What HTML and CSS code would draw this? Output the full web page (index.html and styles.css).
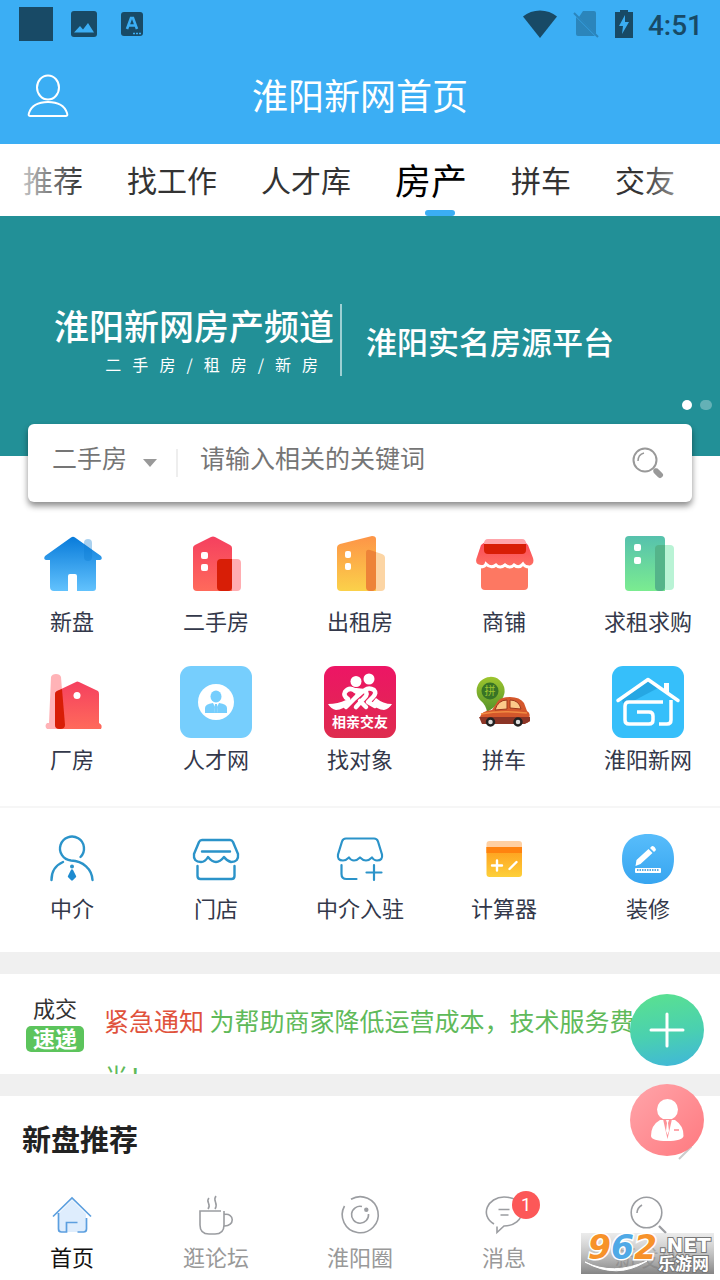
FILE: index.html
```html
<!DOCTYPE html>
<html lang="zh-CN">
<head>
<meta charset="utf-8">
<meta name="viewport" content="width=device-width, initial-scale=1">
<title>淮阳新网首页</title>
<link rel="stylesheet" href="styles.css">
</head>
<body>
<header class="header">
  <div class="status">
    <div class="status-left">
      <svg width="34" height="34" viewBox="0 0 34 34"><rect width="34" height="34" fill="#184a66"/></svg>
      <svg width="26" height="26" viewBox="0 0 26 26"><rect width="26" height="26" rx="3" fill="#184a66"/><path d="M3 21.500l6-6.500 3 3.500 5-6.500 6 9.500z" fill="#3baef4"/></svg>
      <svg width="22" height="24" viewBox="0 0 22 24"><rect width="22" height="24" rx="3" fill="#184a66"/><path d="M6 17L10 6h2l4 11M8 13.500h6" fill="none" stroke="#3baef4" stroke-width="2.600"/><path d="M12 21.500h8" stroke="#3baef4" stroke-width="1.500" stroke-dasharray="2 1"/></svg>
    </div>
    <div class="status-right">
      <svg width="36" height="30" viewBox="0 0 36 30"><path d="M18 29L1 7.500C10-.5 26-.5 35 7.500z" fill="#184a66"/></svg>
      <svg width="28" height="30" viewBox="0 0 28 30"><path d="M11 2h11q2 0 2 2v21L7 8zM4 8l19 19H6q-2 0-2-2z" fill="#2b85bb"/><path d="M2 4l24 24" stroke="#2b85bb" stroke-width="2"/></svg>
      <svg width="20" height="30" viewBox="0 0 20 30"><path d="M6 1h8v2h5v26H1V3h5z" fill="#184a66"/><path d="M11 6L5 17h4l-1 8 7-12h-4z" fill="#3baef4"/></svg>
      <span class="clock">4:51</span>
    </div>
  </div>
  <div class="titlebar">
    <button class="profile" type="button" aria-label="我的">
      <svg width="48" height="48" viewBox="0 0 48 48" fill="none" stroke="#fff" stroke-width="2"><ellipse cx="24" cy="15.500" rx="11" ry="12"/><path d="M6 44q-2 0-1-3c3-9 11-11 19-11s16 2 19 11q1 3-1 3z"/></svg>
    </button>
    <h1 class="title">淮阳新网首页</h1>
  </div>
</header>

<nav class="tabs" aria-label="频道">
  <a href="#tuijian">推荐</a>
  <a href="#gongzuo">找工作</a>
  <a href="#rencai">人才库</a>
  <a href="#fangchan" class="current">房产</a>
  <a href="#pinche">拼车</a>
  <a href="#jiaoyou">交友</a>
</nav>

<main class="main">
  <section class="banner">
    <div class="banner-row">
      <div class="banner-name">
        <h2>淮阳新网房产频道</h2>
        <p><span>二</span> <span>手</span> <span>房</span> <span>/</span> <span>租</span> <span>房</span> <span>/</span> <span>新</span> <span>房</span></p>
      </div>
      <p class="slogan">淮阳实名房源平台</p>
    </div>
    <div class="dots"><i class="on"></i><i></i></div>
  </section>

  <form class="search">
    <label class="kind">
      <select aria-label="类型"><option>二手房</option><option>出租房</option></select>
      <svg width="14" height="8" viewBox="0 0 14 8"><path d="M0 0h14L7 8z" fill="#999"/></svg>
    </label>
    <input class="keyword" type="text" aria-label="关键词" placeholder="请输入相关的关键词">
    <button type="submit" aria-label="搜索">
      <svg width="32" height="32" viewBox="0 0 32 32" fill="none" stroke="#999"><circle cx="13" cy="13" r="11.500" stroke-width="2"/><path d="M6 14c0-4 2-7 6-8" stroke-width="1.500"/><path d="M22 22l2 2" stroke-width="3"/><path d="M24.500 24.500l3.500 3.500" stroke-width="6" stroke-linecap="round"/></svg>
    </button>
  </form>

  <section class="grid">
    <a href="#xinpan">
      <svg class="big" viewBox="0 0 72 72"><defs><linearGradient id="g1" x2="0" y2="1"><stop stop-color="#087bda"/><stop offset="1" stop-color="#62c2fd"/></linearGradient></defs><path d="M35 9.500q2-1.500 4 0L65 28q2 3-1 4h-4v28q0 3-3 3H41V48q0-2-2-2h-5q-2 0-2 2v15H18q-4 0-4-4V32h-4q-3-1-1-4z" fill="url(#g1)"/><rect x="48" y="11" width="8" height="22" rx="4" fill="#0c7bd0" opacity=".35"/></svg>
      <span>新盘</span></a>
    <a href="#ershou">
      <svg class="big" viewBox="0 0 72 72"><defs><linearGradient id="g2" x2="0" y2="1"><stop stop-color="#f5405f"/><stop offset="1" stop-color="#ff6a5b"/></linearGradient></defs><rect x="37" y="31" width="24" height="32" rx="4" fill="#ffadb1"/><path d="M31 9q2-1 4 0l15 8q2 1 2 3v43H17q-4 0-4-4V20q0-2 2-3z" fill="url(#g2)"/><path d="M41 31h11v28q0 4-4 4h-7q-4 0-4-4V35q0-4 4-4z" fill="#d81e06"/><g fill="#fff"><rect x="21" y="24" width="7" height="7" rx="2"/><rect x="21" y="36" width="7" height="7" rx="2"/></g></svg>
      <span>二手房</span></a>
    <a href="#chuzu">
      <svg class="big" viewBox="0 0 72 72"><defs><linearGradient id="g3" x2="0" y2="1"><stop stop-color="#fd9447"/><stop offset="1" stop-color="#fbd14a"/></linearGradient></defs><path d="M42 25q0-4 4-3l12 4q3 1 3 4v29q0 4-4 4H46q-4 0-4-4z" fill="#fcd5a4"/><path d="M13 20q0-3 3-4l32-8q4 0 4 3v52H17q-4 0-4-4z" fill="url(#g3)"/><path d="M42 25q0-4 4-3l6 2v35q0 4-4 4h-2q-4 0-4-4z" fill="#ed8338"/><g fill="#fff"><rect x="21" y="23" width="6" height="7" rx="2"/><rect x="21" y="35" width="6" height="7" rx="2"/></g></svg>
      <span>出租房</span></a>
    <a href="#shangpu">
      <svg class="big" viewBox="0 0 72 72"><defs><linearGradient id="g4" x2="0" y2="1"><stop stop-color="#fb4757"/><stop offset="1" stop-color="#fd6f62"/></linearGradient></defs><path d="M13 38h47v20q0 4-4 4H17q-4 0-4-4z" fill="#fd7862"/><path d="M17 14h40l3 3 5 13q2 7-5 8-4-1-5-3-4 5-9 1-4 4-9 0-5 4-9 0-5 4-10-1-2 3-5 2-7-1-4-8l4-12z" fill="url(#g4)"/><path d="M12 39q5 0 6-3 5 5 10 1 4 4 9 0 5 4 9 0 5 4 9-1 2 3 6 3" fill="none" stroke="#fff" stroke-width="3"/><path d="M16 16q0-5 4-5h34q4 0 4 5z" fill="#ffa4aa"/><path d="M16 16h42v6q0 4-4 4H20q-4 0-4-4z" fill="#d81e06"/></svg>
      <span>商铺</span></a>
    <a href="#qiuzu">
      <svg class="big" viewBox="0 0 72 72"><defs><linearGradient id="g5" x2="0" y2="1"><stop stop-color="#56c1ad"/><stop offset="1" stop-color="#7bec90"/></linearGradient></defs><rect x="43" y="17" width="19" height="45" rx="4" fill="#b9f3d5"/><path d="M17 8h32q4 0 4 4v51H17q-4 0-4-4V12q0-4 4-4z" fill="url(#g5)"/><path d="M43 21q0-4 4-4h6v42q0 4-4 4h-2q-4 0-4-4z" fill="#54b48a"/><g fill="#fff"><rect x="22" y="16" width="7" height="7" rx="2"/><rect x="22" y="29" width="7" height="7" rx="2"/></g></svg>
      <span>求租求购</span></a>
    <a href="#changfang">
      <svg class="big" viewBox="0 0 72 72"><path d="M15 11q1-3 5-3t5 3l4 52H11q-3-3 0-6h2z" fill="#ffb3b7"/><path d="M40 16q1-1 3 0l19 9q1 1 1 3v29q4 2 2 6H23q-4 0-4-4V28q0-2 2-3z" fill="url(#g2)"/><path d="M19 28q0-2 2-3l5-2 3 36q0 4-5 4t-5-4z" fill="#d81e06"/><circle cx="41" cy="29.500" r="3.500" fill="#fff"/></svg>
      <span>厂房</span></a>
    <a href="#rencaiwang">
      <svg class="big" viewBox="0 0 72 72"><rect width="72" height="72" rx="11" fill="#76cefd"/><circle cx="36" cy="36" r="18" fill="#fff"/><g fill="#76cefd"><ellipse cx="36" cy="30.500" rx="5.500" ry="6"/><path d="M25 47v-5q0-4 8-5l2 4-1 6zM47 47v-5q0-4-8-5l-2 4 1 6z"/><path d="M35 38h2l1 9h-4z"/></g></svg>
      <span>人才网</span></a>
    <a href="#duixiang">
      <svg class="big" viewBox="0 0 72 72"><defs><linearGradient id="g6" x2="0" y2="1"><stop stop-color="#ed1565"/><stop offset="1" stop-color="#de2c4e"/></linearGradient></defs><rect width="72" height="72" rx="11" fill="url(#g6)"/><g fill="#fff"><circle cx="32" cy="15.500" r="5.500"/><circle cx="45" cy="13" r="5.500"/><path d="M4 38q10 0 18-4l5 2q-8 8-15 8-5-1-8-6zM68 38q-9 0-16-6l-4 5q5 7 12 7 5-1 8-6z"/></g><g fill="none" stroke="#fff" stroke-width="4.500" stroke-linecap="round" stroke-linejoin="round"><path d="M24 33q-5-3-3-7 4-5 9-2l9 1M22 41l11-11q2-4-2-5M32 41l10-11q2-5-3-5l-8 7M42 41l-6-6M41 24q4-3 9 0 3 3-1 7l-5 5 7 4"/></g><text x="36" y="61" class="logo-text" text-anchor="middle">相亲交友</text></svg>
      <span>找对象</span></a>
    <a href="#pincheicon">
      <svg class="big" viewBox="0 0 72 72"><defs><linearGradient id="g7" x2="0" y2="1"><stop stop-color="#9dc52e"/><stop offset="1" stop-color="#55932a"/></linearGradient></defs><path d="M19 46q-1-7-7-12a14 14 0 1 1 22-1q-6 8-15 13z" fill="url(#g7)"/><circle cx="22" cy="25" r="8.500" fill="#387326"/><text x="22" y="29" class="pin-text" text-anchor="middle">拼</text><path d="M12 51q1-6 12-7l6-9q3-4 12-4 10 0 14 6l3 8q4 2 2 7l1 3-3 2H14z" fill="#d4572b"/><path d="M27 44q3-10 12-10v9zM42 34q9 0 11 9l-11-1z" fill="#fbc98a" stroke="#9c381d"/><path d="M11 51h51v4l-5 3H14z" fill="#8c3526"/><path d="M13 48q20-4 46-1" fill="none" stroke="#f18b42" stroke-width="1.500"/><g fill="#ddd" stroke="#222" stroke-width="2.500"><circle cx="22.500" cy="56" r="3.500"/><circle cx="50" cy="56" r="3.500"/></g></svg>
      <span>拼车</span></a>
    <a href="#xinwang">
      <svg class="big" viewBox="0 0 72 72"><rect width="72" height="72" rx="11" fill="#36bffa"/><path d="M10 34l26-19 10 7-34 18z" fill="#1c98d4" opacity=".6"/><g fill="none" stroke="#fff" stroke-width="3.500"><path d="M6 34.500l30-21 30 21" stroke-linecap="round" stroke-linejoin="round"/><path d="M54.500 17v9" stroke-width="5"/><path d="M51 36H17q-4 0-4 4v14q0 4 4 4h20q4 0 4-4v-4q0-4-4-4H25M59 34v20q0 4-4 4h-8"/></g></svg>
      <span>淮阳新网</span></a>
  </section>

  <section class="grid tools">
    <a href="#zhongjie">
      <svg class="mid" viewBox="0 0 56 56" fill="none" stroke="#2b93c9" stroke-width="2.400" stroke-linecap="round"><path d="M36.500 26A12 12 0 1 0 27 29.500C39 30 48 38 48.500 49M7.500 49q0-13 11.500-18"/><circle cx="28" cy="35.500" r="1" fill="#1e8bd0" stroke-width="2"/><path d="M28 39.500l3 6-3 3-3-3z" fill="#1e8bd0" stroke="#1e8bd0" stroke-linejoin="round"/></svg>
      <span>中介</span></a>
    <a href="#mendian">
      <svg class="mid" viewBox="0 0 56 56" fill="none" stroke="#2b93c9" stroke-width="2.400" stroke-linecap="round" stroke-linejoin="round"><path d="M14 9h28q2 0 3 2l5 12q1 8-7 8-4-1-7-5-4 5-8 5t-8-5q-3 5-7 5-8 0-7-8l5-12q1-2 3-2zM14 20.500h28M9.500 35v10q0 3 3 3h31q3 0 3-3V35"/></svg>
      <span>门店</span></a>
    <a href="#ruzhu">
      <svg class="mid" viewBox="0 0 56 56" fill="none" stroke="#2b93c9" stroke-width="2.200" stroke-linecap="round" stroke-linejoin="round"><path d="M14 7.500h28q3 0 4 3l4 13q1 6-5 6-3 0-5-3-3 3-6 3t-6-3q-3 3-6 3t-5-3q-3 3-6 3-6 0-5-6l4-13q1-3 4-3zM9.500 34v9q0 5 5 5h10M34.500 41.500h15M42 34v15"/></svg>
      <span>中介入驻</span></a>
    <a href="#jisuan">
      <svg class="mid" viewBox="0 0 56 56"><defs><linearGradient id="g8" x2="0" y2="1"><stop stop-color="#ff9b1c"/><stop offset="1" stop-color="#fdd03a"/></linearGradient></defs><rect x="10.500" y="10" width="35.500" height="14" rx="3" fill="#ffd0a2"/><path d="M10.500 16H46v27q0 3-3 3H13.500q-3 0-3-3z" fill="url(#g8)"/><path d="M10.500 16H46v6H10.500z" fill="#ff830f"/><path d="M16 34.500h10M21 29.500v10M33.500 38l7-7" stroke="#fff" stroke-width="2.400" stroke-linecap="round"/></svg>
      <span>计算器</span></a>
    <a href="#zhuangxiu">
      <svg class="mid" viewBox="0 0 56 56"><defs><linearGradient id="g9" x2="0" y2="1"><stop stop-color="#58bdfb"/><stop offset="1" stop-color="#37a5f0"/></linearGradient></defs><path d="M28 3c17 0 26 9 26 25S45 53 28 53 2 44 2 28 11 3 28 3z" fill="url(#g9)"/><path d="M15.500 35l1-6 12-11 4 4-12 11zM30 17l2-2q3 0 4 4l-2 2z" fill="#fff"/><rect x="15" y="37" width="26" height="5" rx="1" fill="#fff"/><path d="M17 39h22" stroke="#2b93d9" stroke-width="1.500" stroke-dasharray="1.500 1"/></svg>
      <span>装修</span></a>
  </section>

  <section class="notice">
    <div class="notice-tag"><span>成交</span><b>速递</b></div>
    <p><em>紧急通知</em> 为帮助商家降低运营成本，技术服务费减半！</p>
  </section>

  <section class="recommend">
    <h2>新盘推荐</h2>
    <svg width="14" height="26" viewBox="0 0 14 26"><path d="M1 1l12 12L1 25" fill="none" stroke="#ccc" stroke-width="2"/></svg>
  </section>
</main>

<footer class="bottom">
  <div class="fabs">
    <button class="fab add" type="button" aria-label="发布"><svg width="36" height="36" viewBox="0 0 36 36"><path d="M18 2v32M2 18h32" stroke="#fff" stroke-width="3" stroke-linecap="round"/></svg></button>
    <button class="fab agent" type="button" aria-label="经纪人"><svg width="74" height="72" viewBox="0 0 74 72"><circle cx="37.500" cy="25.500" r="10.500" fill="#fff"/><path d="M30 36h15q9 6 8.500 16-1 5-16.500 5t-16-5q0-11 9-16z" fill="#fff"/><path d="M33 35l4.500 20L42 35z" fill="#fd9298"/><path d="M36 36h3l-1 3 1 8-1.500 4-1.500-4 1-8z" fill="#fff"/><path d="M44 46h5" stroke="#fd8a91" stroke-width="1.500"/></svg></button>
  </div>
  <nav class="tabbar" aria-label="主导航">
    <a href="#home" class="current">
      <svg viewBox="0 0 48 48" fill="none" stroke="#5c9fdf" stroke-width="1.700"><path d="M10 23l14-14 14 14v18H10z" fill="#deedfd" stroke="none"/><path d="M5 25.500L24 7l19 18.500M10.500 22v16q0 3 3 3h5V31.500h11M38.500 27v11q0 3-3 3h-6"/></svg>
      <span>首页</span></a>
    <a href="#forum">
      <svg viewBox="0 0 48 48" fill="none" stroke="#9b9da1" stroke-width="1.600"><path d="M29 20H8v14q0 9 9 9h6q9 0 9-9V20M32 23.500c11-2 11 12 0 11.500M17 7c-4 4 3 6-1 11M24 5c-4 5 3 7-1 13"/></svg>
      <span>逛论坛</span></a>
    <a href="#circle">
      <svg viewBox="0 0 48 48" fill="none" stroke="#9b9da1" stroke-width="1.600"><path d="M15 8.300A18 18 0 1 1 8.500 15M26 15.500A8.500 8.500 0 1 0 32.500 23"/><circle cx="30.300" cy="18.700" r="2.200" fill="#9b9da1" stroke="none"/></svg>
      <span>淮阳圈</span></a>
    <a href="#message">
      <svg viewBox="0 0 48 48" fill="none" stroke="#9b9da1" stroke-width="1.600"><path d="M14 33C-1 24 8 6 24 6c11 0 18 6 18 14 0 9-8 15-18 15l-7 6.500v-6M18.500 18.500h11M20.500 24h8"/></svg>
      <span>消息</span><i class="badge">1</i></a>
    <a href="#discover">
      <svg viewBox="0 0 48 48" fill="none" stroke="#9b9da1" stroke-width="1.600"><circle cx="22.500" cy="21.500" r="15.300"/><path d="M13 22q0-5 5-8"/><path d="M35 35l7 7" stroke-width="2.200"/></svg>
      <span>新发现</span></a>
  </nav>
  <div class="mark">
    <svg width="133" height="41" viewBox="0 0 133 41">
      <defs><linearGradient id="gm" x2="0" y2="1"><stop stop-color="#d8d8d8" stop-opacity=".5"/><stop offset="1" stop-color="#777" stop-opacity=".9"/></linearGradient></defs>
      <rect width="133" height="41" fill="url(#gm)"/>
      <path d="M4 29q28 14 62-1-30 19-62 1z" fill="#fff" stroke="#fff"/>
      <text x="7" y="26" class="mark-num"><tspan fill="#f7922a">9</tspan><tspan fill="#4fa9e6">6</tspan><tspan fill="#f7922a">2</tspan></text>
      <text x="78" y="19" class="mark-net">.NET</text>
      <text x="77" y="37" class="mark-cn">乐游网</text>
    </svg>
  </div>
</footer>
</body>
</html>
```

FILE: styles.css
```css
* { box-sizing: border-box; }

body {
  margin: 0;
  min-height: 100vh;
  display: flex;
  flex-direction: column;
  background: #fff;
  color: #333;
  font-family: "Noto Sans CJK SC", sans-serif;
  font-size: 22px;
}

h1, h2, p { margin: 0; font-weight: 400; }
a { color: inherit; text-decoration: none; }
button { padding: 0; border: 0; background: none; }
svg { display: block; flex: none; }
i, em { font-style: normal; }

.header { background: #3baef4; }

.status {
  height: 48px;
  padding: 0 17px 0 19px;
  display: flex;
  justify-content: space-between;
  align-items: center;
}
.status-left, .status-right { display: flex; align-items: center; }
.status-left { gap: 18px; }
.status-left svg:last-child { margin-left: 6px; }
.status-right { gap: 14px; }
.clock {
  color: #184a66;
  font: 500 28px/44px Roboto, sans-serif;
  padding-top: 4px;
}

.titlebar {
  height: 96px;
  padding: 0 24px;
  display: grid;
  grid-template-columns: 48px 1fr 48px;
  align-items: center;
}
.title {
  padding-bottom: 4px;
  color: #fff;
  font-size: 36px;
  line-height: 48px;
  text-align: center;
}

.tabs {
  position: relative;
  height: 72px;
  padding-left: 23px;
  display: flex;
  gap: 44px;
  overflow: hidden;
  white-space: nowrap;
  font-size: 30px;
  line-height: 70px;
}
.tabs::before, .tabs::after {
  content: "";
  position: absolute;
  z-index: 1;
  top: 0;
  bottom: 0;
  width: 80px;
  pointer-events: none;
}
.tabs::before { left: 0; background: linear-gradient(to right, #fff, transparent); }
.tabs::after { right: 0; background: linear-gradient(to left, #fff, transparent); }
.tabs .current {
  position: relative;
  color: #000;
  font-size: 36px;
}
.tabs .current::after {
  content: "";
  position: absolute;
  left: 30px;
  bottom: 0;
  width: 30px;
  height: 6px;
  border-radius: 3px;
  background: #3baef4;
}

.banner {
  height: 240px;
  padding: 88px 8px 0 54px;
  background: #229097;
  color: #fff;
}
.banner-row { display: flex; align-items: center; }
.banner-name {
  padding-right: 6px;
  border-right: 2px solid #9ed0d3;
}
.banner-name h2 {
  font-size: 35px;
  font-weight: 500;
  line-height: 42px;
}
.banner-name p {
  padding: 6px 16px 0 0;
  display: flex;
  justify-content: flex-end;
  gap: 11px;
  font-size: 16px;
  line-height: 24px;
}
.slogan {
  padding: 2px 0 0 24px;
  font-size: 31px;
  font-weight: 500;
  line-height: 44px;
}
.dots {
  padding-top: 24px;
  display: flex;
  justify-content: flex-end;
  align-items: center;
  gap: 8px;
}
.dots i {
  width: 12px;
  height: 10px;
  border-radius: 5px;
  background: #64b1b6;
}
.dots .on { width: 10px; background: #fff; }

.search {
  position: relative;
  height: 78px;
  margin: -32px 28px 0;
  padding: 0 28px 0 24px;
  display: flex;
  align-items: center;
  border-radius: 6px;
  background: #fff;
  box-shadow: 0 4px 6px rgba(0, 0, 0, .45);
}
.kind {
  width: 126px;
  height: 28px;
  display: flex;
  align-items: center;
  justify-content: space-between;
  padding-right: 19px;
  border-right: 2px solid #eee;
}
.kind select, .keyword {
  border: 0;
  outline: 0;
  padding: 0 0 12px;
  height: 52px;
  background: none;
  color: #757575;
  font: 25px/40px "Noto Sans CJK SC", sans-serif;
}
.kind select { width: 80px; appearance: none; }
.keyword { flex: 1; min-width: 0; margin-left: 22px; }
.keyword::placeholder { color: #757575; }

.grid {
  padding: 26px 0 32px;
  display: grid;
  grid-template-columns: repeat(5, 1fr);
  row-gap: 30px;
}
.grid a {
  display: flex;
  flex-direction: column;
  align-items: center;
  gap: 4px;
  color: #33384a;
  line-height: 32px;
}
.big { width: 72px; height: 72px; }
.mid { width: 56px; height: 56px; }
.tools {
  padding: 23px 0 29px;
  border-top: 2px solid #f6f6f6;
}

.logo-text { fill: #fff; font-size: 14px; font-weight: 700; }
.pin-text { fill: #9dc52e; font-size: 11px; }

.notice {
  height: 144px;
  padding: 18px 48px 0 26px;
  display: flex;
  gap: 20px;
  overflow: hidden;
  border: solid #f0f0f0;
  border-width: 22px 0;
}
.notice-tag {
  width: 58px;
  flex: none;
  display: flex;
  flex-direction: column;
  text-align: center;
  line-height: 30px;
}
.notice-tag b {
  margin-top: 4px;
  padding-bottom: 4px;
  border-radius: 5px;
  background: #5cc45c;
  color: #fff;
  line-height: 22px;
}
.notice p {
  color: #5fba5a;
  font-size: 25px;
  line-height: 56px;
}
.notice em { color: #e0523c; }

.recommend {
  padding: 20px 28px 16px 22px;
  display: flex;
  justify-content: space-between;
  align-items: flex-end;
}
.recommend h2 {
  color: #222;
  font-size: 29px;
  font-weight: 700;
  line-height: 44px;
}

.bottom { position: relative; margin-top: auto; }
.fabs {
  position: absolute;
  right: 16px;
  bottom: 124px;
  display: flex;
  flex-direction: column;
  gap: 18px;
}
.fab {
  width: 74px;
  height: 72px;
  display: grid;
  place-items: center;
  border-radius: 50%;
}
.add { background: linear-gradient(170deg, #5be28e, #4ad0b0 55%, #3fb5dc); }
.agent { background: linear-gradient(135deg, #ffa5aa, #ff797f); }

.tabbar {
  height: 104px;
  padding-top: 15px;
  display: grid;
  grid-template-columns: repeat(5, 1fr);
  background: #fff;
  color: #999;
}
.tabbar a {
  position: relative;
  display: flex;
  flex-direction: column;
  align-items: center;
  gap: 2px;
  line-height: 30px;
}
.tabbar svg { width: 48px; height: 48px; }
.tabbar .current { color: #111; }
.badge {
  position: absolute;
  top: 0;
  left: 50%;
  width: 28px;
  height: 28px;
  margin-left: 8px;
  border-radius: 50%;
  background: #fc5858;
  color: #fff;
  font: 18px/28px Roboto, sans-serif;
  text-align: center;
}

.mark {
  position: absolute;
  right: 6px;
  bottom: 6px;
}
.mark svg { overflow: visible; }
.mark-num { font: italic 700 33px "DejaVu Sans", sans-serif; stroke: #fff; stroke-width: 3px; paint-order: stroke; }
.mark-net { font: 700 20px "DejaVu Sans", sans-serif; fill: #fff; stroke: #777; stroke-width: 2px; paint-order: stroke; }
.mark-cn { font: 700 17px "Noto Sans CJK SC", sans-serif; fill: #fff; stroke: #777; stroke-width: 2px; paint-order: stroke; }
```
